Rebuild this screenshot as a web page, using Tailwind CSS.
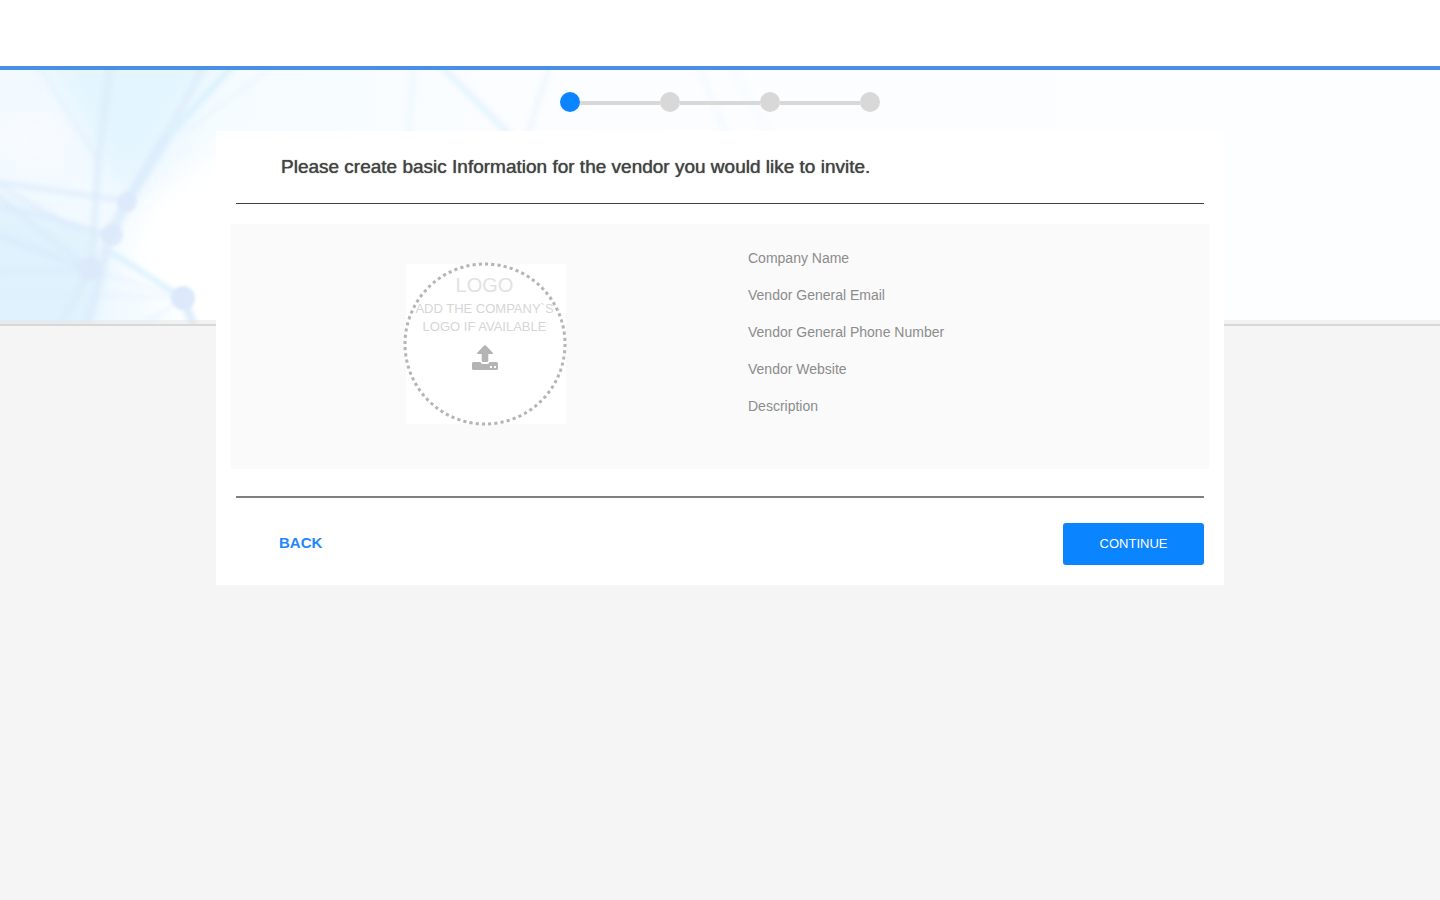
<!DOCTYPE html>
<html lang="en">
<head>
<meta charset="utf-8">
<meta name="viewport" content="width=device-width, initial-scale=1">
<title>Invite a vendor</title>
<script src="https://cdn.jsdelivr.net/npm/@tailwindcss/browser@4"></script>
</head>
<body class="min-h-screen bg-[#f5f5f5] font-['Liberation_Sans',Arial,sans-serif]">
<header class="h-[70px] border-b-4 border-[#4a90e2] bg-white"></header>
<div class="relative">
  <!-- Decorative network backdrop -->
  <div class="absolute inset-x-0 top-0 h-64 border-b-2 border-[#d8d8d8]" aria-hidden="true">
    <svg class="h-full w-full" viewBox="0 0 1440 254" preserveAspectRatio="xMinYMin slice">
      <defs>
        <filter id="soft" filterUnits="userSpaceOnUse" x="-20" y="-20" width="1480" height="300" color-interpolation-filters="sRGB"><feGaussianBlur stdDeviation="2.4"/></filter>
        <filter id="nodes" filterUnits="userSpaceOnUse" x="-20" y="-20" width="1480" height="300" color-interpolation-filters="sRGB"><feGaussianBlur stdDeviation="1.6"/></filter>
        <filter id="haze" filterUnits="userSpaceOnUse" x="-80" y="-80" width="1600" height="420" color-interpolation-filters="sRGB"><feGaussianBlur stdDeviation="14"/></filter>
        <linearGradient id="sky" gradientUnits="userSpaceOnUse" x1="0" y1="0" x2="1440" y2="0">
          <stop offset="0" stop-color="#f2faff"/><stop offset=".2" stop-color="#f6fcff"/><stop offset=".38" stop-color="#fcfdff"/><stop offset="1" stop-color="#fdfeff"/>
        </linearGradient>
      </defs>
      <rect width="1440" height="254" fill="url(#sky)"/>
      <g filter="url(#haze)">
        <path d="M30-40H235L160 85 125 130 95 80Z" fill="#e3f5fe"/>
        <path d="M-40 125L90 165 105 195 85 300H-40Z" fill="#dff2fd"/>
        <path d="M230 70L150 130 125 190 190 270H260V70Z" fill="#fff"/>
        <ellipse cx="35" cy="70" rx="42" ry="30" fill="#f7faff"/>
      </g>
      <path d="M0 122L98 165 88 200 84 254H0Z" fill="#dff2fd" opacity=".4" filter="url(#soft)"/>
      <path d="M115 135L120 150 110 160 85 160 60 148 60 135Z" fill="#f2faff" filter="url(#soft)"/>
      <g fill="none" stroke="#dcebfb" stroke-linecap="round" filter="url(#soft)">
        <path d="M110 -5L98 95 91 200" stroke-width="7" opacity=".7"/>
        <path d="M38 -5L98 90" stroke-width="3" opacity=".5"/>
        <path d="M205 -5L165 68 127 132" stroke-width="7" opacity=".7"/>
        <path d="M233 -5L165 70 136 118" stroke-width="7" stroke="#dcf2fd"/>
        <path d="M165 68L127 132 110 165" stroke-width="11" opacity=".8"/>
        <path d="M275 -5L185 62" stroke-width="3" opacity=".3"/>
        <path d="M-5 112L127 131" stroke-width="5" opacity=".8"/>
        <path d="M-5 112L65 155 112 168" stroke-width="5" opacity=".6"/>
        <path d="M-5 136L60 150 112 166" stroke-width="5" opacity=".8"/>
        <path d="M-5 124L90 200" stroke-width="5" opacity=".7"/>
        <path d="M-5 164L90 200" stroke-width="6"/>
        <path d="M-5 202L90 199" stroke-width="5" opacity=".7"/>
        <path d="M-5 222L183 228M92 200L183 228" stroke-width="3" opacity=".4"/>
        <path d="M112 183L183 228" stroke-width="5" stroke="#d9f0fd"/>
        <path d="M183 228L145 254" stroke-width="3" opacity=".4"/>
        <path d="M183 228L195 260" stroke-width="8"/>
        <path d="M90 200L58 260" stroke-width="5" opacity=".8"/>
        <path d="M110 165L86 260" stroke-width="9" opacity=".8"/>
        <path d="M440 -5L510 65" stroke-width="5" stroke="#e1f3fe"/>
        <path d="M550 -5L526 70" stroke-width="5" stroke="#edf8fe"/>
        <path d="M414 -5L408 70" stroke-width="6" stroke="#f0f9fe"/>
        <path d="M698 -5L710 25 729 70" stroke-width="6" stroke="#f3fafe"/>
        <path d="M730 -5L773 70" stroke-width="9" stroke="#f7fcfe"/>
      </g>
      <g fill="#dce9fb" filter="url(#nodes)">
        <circle cx="127" cy="132" r="10" opacity=".8"/><circle cx="112" cy="165" r="11" opacity=".8"/><circle cx="90" cy="199" r="12"/><circle cx="183" cy="228" r="12"/>
      </g>
      <rect y="250" width="1440" height="4" fill="#e8e8e8" opacity=".55"/>
    </svg>
  </div>

  <main class="relative mx-auto w-[70%] pt-[22px]">
    <ol class="mx-auto flex w-80 items-center" aria-label="Progress">
      <li class="size-5 rounded-full bg-[#0a84ff]" aria-current="step"></li>
      <li class="flex flex-1 items-center"><span class="mt-0.5 h-1 flex-1 bg-[#d8d8d8]"></span><span class="size-5 rounded-full bg-[#d8d8d8]"></span></li>
      <li class="flex flex-1 items-center"><span class="mt-0.5 h-1 flex-1 bg-[#d8d8d8]"></span><span class="size-5 rounded-full bg-[#d8d8d8]"></span></li>
      <li class="flex flex-1 items-center"><span class="mt-0.5 h-1 flex-1 bg-[#d8d8d8]"></span><span class="size-5 rounded-full bg-[#d8d8d8]"></span></li>
    </ol>

    <form class="mt-[19px] bg-white px-[15px] pb-5">
      <div class="mx-[5px] border-b border-[#404040] px-[45px] pt-6 pb-6">
        <h1 class="text-[19px] leading-6 font-medium text-[#444] [text-shadow:0_0_1px_#444]">Please create basic Information for the vendor you would like to invite.</h1>
      </div>
      <div class="mt-5 grid grid-cols-2 bg-[#fafafa] pt-5 pb-[43px]">
        <div class="flex justify-center pt-[18px] pl-[18px]">
          <label class="relative flex size-[164px] cursor-pointer flex-col items-center pt-[11px] text-center">
            <svg class="absolute inset-0 size-full" viewBox="0 0 164 164" aria-hidden="true">
              <rect x="3" y="2" width="160" height="160" fill="#fff"/>
              <circle cx="82" cy="82" r="80" fill="none" stroke="#b5b5b5" stroke-width="3" pathLength="480" stroke-dasharray="3 3"/>
            </svg>
            <span class="relative text-xl leading-6 text-[#e2e2e2]">LOGO</span>
            <span class="relative mt-[3px] text-[13px] leading-[18px] whitespace-nowrap text-[#d6d6d6]">ADD THE COMPANY`S<br>LOGO IF AVAILABLE</span>
            <svg class="relative mt-[9px] h-[26px] w-[26px]" viewBox="0 0 26 26" fill="#b4b4b4" aria-hidden="true">
              <path d="M12.2 .6Q13 0 13.800 .6L20.800 7.700Q21.600 9 20.200 9H16.300V16Q16.300 17 15.300 17H10.700Q9.700 17 9.700 16V9H5.800Q4.400 9 5.200 7.700Z"/>
              <path fill-rule="evenodd" d="M1.500 17H8.500Q9 19 11 19H15Q17 19 17.500 17H24.500Q26 17 26 18.500V23.500Q26 25 24.500 25H1.500Q0 25 0 23.500V18.500Q0 17 1.500 17ZM18 21V23H20V21ZM22 21V23H24V21Z"/>
            </svg>
            <input type="file" class="sr-only" aria-label="Company logo">
          </label>
        </div>
        <div class="flex flex-col gap-[9px] pr-5 pl-7">
          <input type="text" aria-label="Company Name" placeholder="Company Name" class="h-7 w-full text-sm outline-none placeholder:text-[#8c8c8c]">
          <input type="email" aria-label="Vendor General Email" placeholder="Vendor General Email" class="h-7 w-full text-sm outline-none placeholder:text-[#8c8c8c]">
          <input type="tel" aria-label="Vendor General Phone Number" placeholder="Vendor General Phone Number" class="h-7 w-full text-sm outline-none placeholder:text-[#8c8c8c]">
          <input type="url" aria-label="Vendor Website" placeholder="Vendor Website" class="h-7 w-full text-sm outline-none placeholder:text-[#8c8c8c]">
          <input type="text" aria-label="Description" placeholder="Description" class="h-7 w-full text-sm outline-none placeholder:text-[#8c8c8c]">
        </div>
      </div>
      <div class="mx-[5px] mt-[27px] flex items-center justify-between border-t-2 border-[#808080] pt-[25px] pl-[43px]">
        <button type="button" class="pb-0.5 text-[15px] leading-5 font-bold text-[#2387fc]">BACK</button>
        <button type="submit" class="h-[42px] w-[141px] rounded-[3px] bg-[#0a84ff] text-[13px] text-white">CONTINUE</button>
      </div>
    </form>
  </main>
</div>
</body>
</html>
